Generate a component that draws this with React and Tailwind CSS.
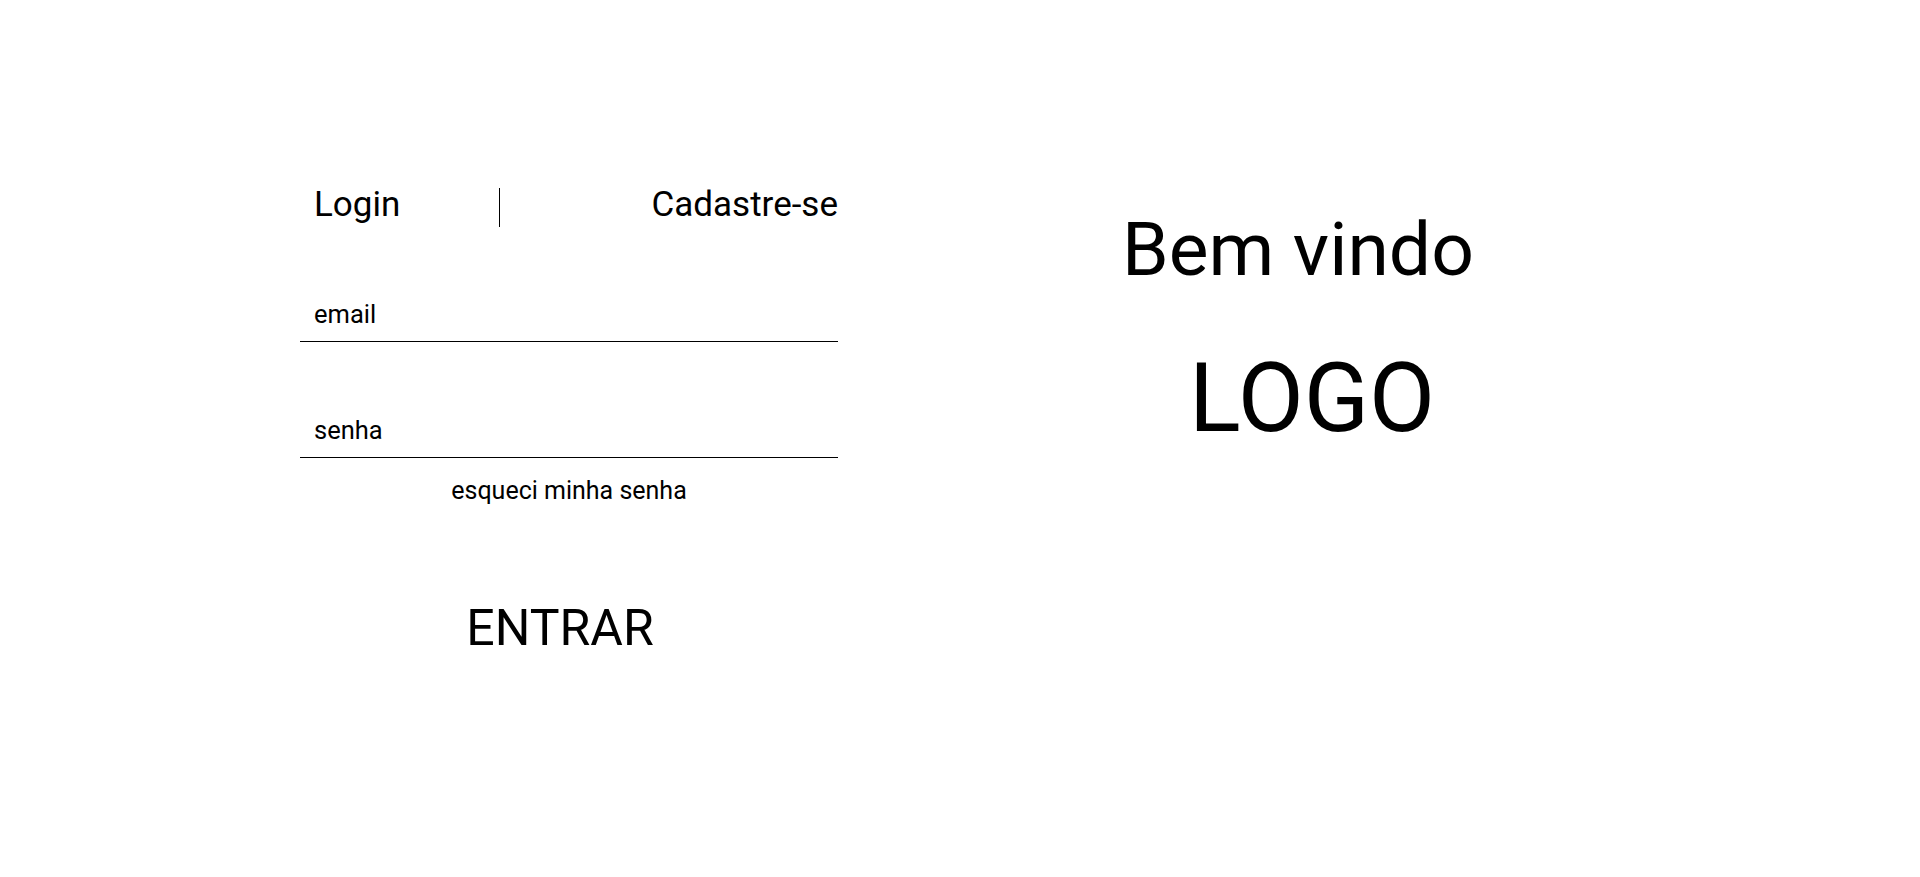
export default function App() {
    return (
        <div className="w-full h-[877px] bg-white text-black flex pl-[300px] font-['Roboto',sans-serif]">
            {/* Form */}
            <div className="w-[538px] pt-[184px] flex flex-col">
                <div className="flex items-start">
                    <span className="w-[199px] pl-[14px] text-[35px] leading-[41px]">Login</span>
                    <div className="mt-[4px] h-[39px] w-px bg-black" />
                    <span className="flex-1 text-right text-[35px] leading-[41px]">Cadastre-se</span>
                </div>

                <input
                    type="email"
                    placeholder="email"
                    className="mt-[72px] w-full border-b border-black bg-transparent pl-[14px] pb-[12px] text-[25.5px] leading-[30px] placeholder:text-black outline-none"
                />
                <input
                    type="password"
                    placeholder="senha"
                    className="mt-[73px] w-full border-b border-black bg-transparent pl-[14px] pb-[12px] text-[25.5px] leading-[30px] placeholder:text-black outline-none"
                />

                <a href="#" className="mt-[18px] text-center text-[25px] leading-[30px]">
                    esqueci minha senha
                </a>

                <button className="mt-[93px] w-full pr-[18px] text-center text-[50px] leading-[58px]">
                    ENTRAR
                </button>
            </div>

            {/* Welcome */}
            <div className="ml-[284px] pt-[205px] flex flex-col items-start">
                <h1 className="text-[75px] leading-[89px]">Bem vindo</h1>
                <div className="mt-[48px] ml-[67px] text-[96px] leading-[112px]">LOGO</div>
            </div>
        </div>
    );
}
